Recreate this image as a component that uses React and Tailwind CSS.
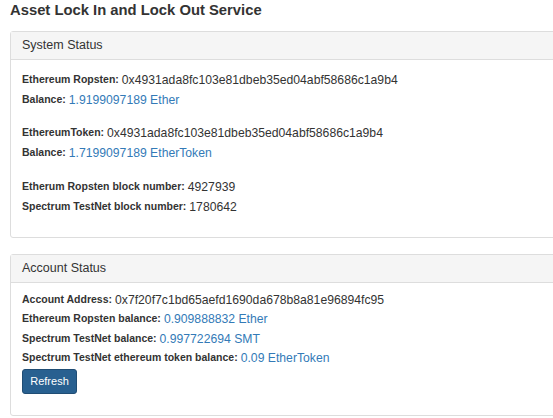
export default function App() {
    const label = "font-bold text-[10.5px] text-[#333]";
    const value = "text-[12.2px] text-[#333]";
    const link = "text-[12.2px] text-[#337ab7]";

    return (
        <div
            className="w-[553px] h-[418px] overflow-hidden bg-white text-[#333]"
            style={{ fontFamily: '"Liberation Sans", Arial, sans-serif' }}
        >
            {/* TITLE */}
            <h3 className="pl-[10px] pt-[1px] h-[31px] text-[14.8px] font-bold leading-[19px]">
                Asset Lock In and Lock Out Service
            </h3>

            {/* SYSTEM STATUS */}
            <div className="ml-[10px] w-[560px] border border-[#ddd] rounded-[3px] h-[207px]">
                <div className="bg-[#f5f5f5] border-b border-[#ddd] h-[28px] px-[11px] flex items-center text-[12.5px]">
                    System Status
                </div>
                <div className="px-[11px] pt-[10px]">
                    <div className="h-[20px] flex items-center gap-[3px]">
                        <span className={label}>Ethereum Ropsten:</span>
                        <span className={value}>0x4931ada8fc103e81dbeb35ed04abf58686c1a9b4</span>
                    </div>
                    <div className="h-[20px] flex items-center gap-[3px]">
                        <span className={label}>Balance:</span>
                        <span className={link}>1.9199097189 Ether</span>
                    </div>
                    <div className="h-[13px]" />
                    <div className="h-[20px] flex items-center gap-[3px]">
                        <span className={label}>EthereumToken:</span>
                        <span className={value}>0x4931ada8fc103e81dbeb35ed04abf58686c1a9b4</span>
                    </div>
                    <div className="h-[20px] flex items-center gap-[3px]">
                        <span className={label}>Balance:</span>
                        <span className={link}>1.7199097189 EtherToken</span>
                    </div>
                    <div className="h-[14px]" />
                    <div className="h-[20px] flex items-center gap-[3px]">
                        <span className={label}>Etherum Ropsten block number:</span>
                        <span className={value}>4927939</span>
                    </div>
                    <div className="h-[20px] flex items-center gap-[3px]">
                        <span className={label}>Spectrum TestNet block number:</span>
                        <span className={value}>1780642</span>
                    </div>
                </div>
            </div>

            {/* ACCOUNT STATUS */}
            <div className="ml-[10px] mt-[16px] w-[560px] border border-[#ddd] rounded-[3px] h-[162px]">
                <div className="bg-[#f5f5f5] border-b border-[#ddd] h-[28px] px-[11px] flex items-center text-[12.5px]">
                    Account Status
                </div>
                <div className="px-[11px] pt-[7px]">
                    <div className="h-[19.5px] flex items-center gap-[3px]">
                        <span className={label}>Account Address:</span>
                        <span className={value}>0x7f20f7c1bd65aefd1690da678b8a81e96894fc95</span>
                    </div>
                    <div className="h-[19.5px] flex items-center gap-[3px]">
                        <span className={label}>Ethereum Ropsten balance:</span>
                        <span className={link}>0.909888832 Ether</span>
                    </div>
                    <div className="h-[19.5px] flex items-center gap-[3px]">
                        <span className={label}>Spectrum TestNet balance:</span>
                        <span className={link}>0.997722694 SMT</span>
                    </div>
                    <div className="h-[19.5px] flex items-center gap-[3px]">
                        <span className={label}>Spectrum TestNet ethereum token balance:</span>
                        <span className={link}>0.09 EtherToken</span>
                    </div>
                    <button className="mt-[1px] w-[55px] h-[25px] rounded-[3px] bg-[#286090] border border-[#204d74] text-white text-[11px] flex items-center justify-center">
                        Refresh
                    </button>
                </div>
            </div>
        </div>
    );
}
